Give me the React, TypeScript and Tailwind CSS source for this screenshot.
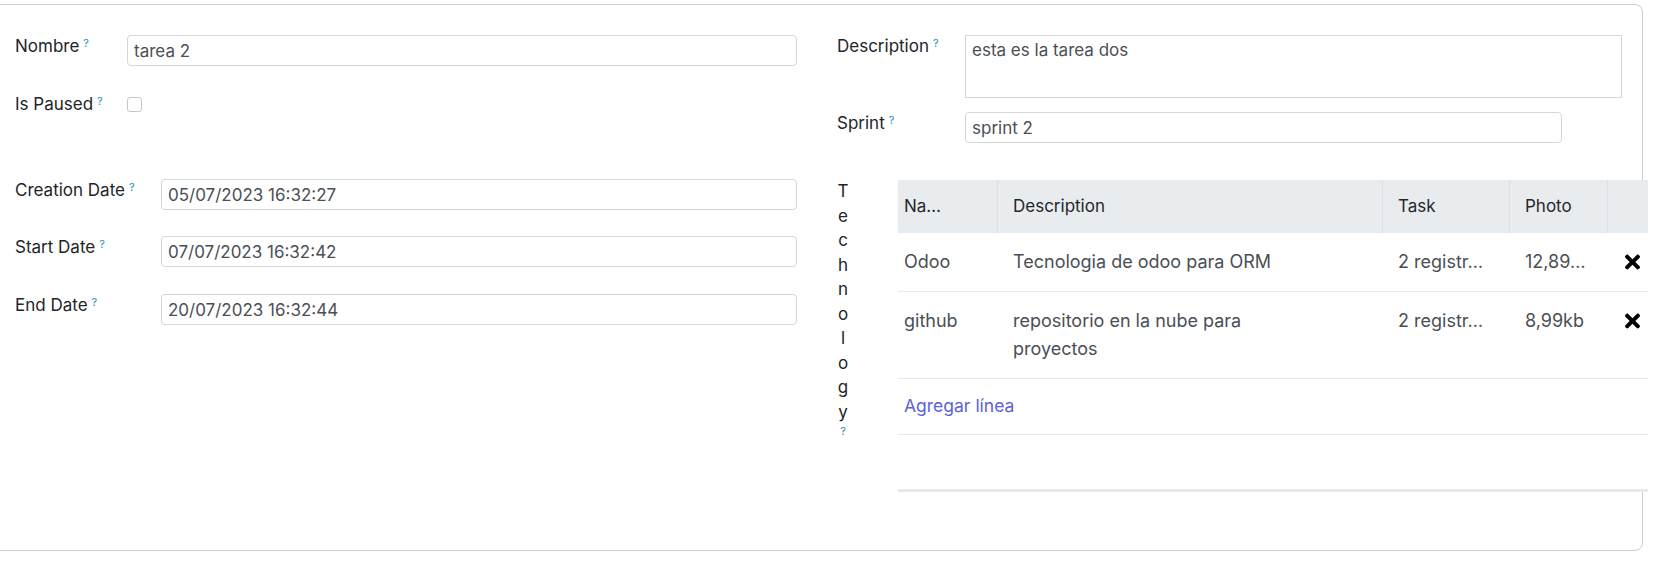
import { FaTimes } from "react-icons/fa";

// Odoo-style form: task record with technology one2many list

function Label({ text, className = "" }: { text: string; className?: string }) {
  return (
    <label className={`text-[17px] leading-[22px] text-[#212529] shrink-0 ${className}`}>
      {text}
      <sup className="ml-[4px] text-[11px] text-[#1f8db5]">?</sup>
    </label>
  );
}

function TextInput({ value, className = "" }: { value: string; className?: string }) {
  return (
    <input
      readOnly
      value={value}
      className={`h-[31px] px-[6px] border border-[#d3d6db] rounded-[4px] text-[17px] text-[#4a4f55] outline-none bg-white ${className}`}
    />
  );
}

const technologies = [
  { name: "Odoo", description: ["Tecnologia de odoo para ORM"], task: "2 registr…", photo: "12,89…" },
  { name: "github", description: ["repositorio en la nube para", "proyectos"], task: "2 registr…", photo: "8,99kb" },
];

export default function App() {
  const letters = "Technology".split("");

  return (
    <div className="min-h-[563px] bg-white font-['Inter',sans-serif]">
      <div className="ml-[-8px] mt-[4px] w-[1651px] h-[547px] border border-[#cbccd3] rounded-lg bg-white pt-[30px] pl-[22px] flex">
        {/* Left column */}
        <div className="w-[782px] shrink-0">
          <div className="flex items-start">
            <Label text="Nombre" className="w-[112px]" />
            <TextInput value="tarea 2" className="flex-1" />
          </div>
          <div className="flex items-start mt-[27px]">
            <Label text="Is Paused" className="w-[112px]" />
            <div className="mt-[4px] w-[15px] h-[15px] border border-[#c5c8ce] rounded-[3px] bg-white" />
          </div>

          <div className="mt-[64px] flex flex-col">
            <div className="flex items-start">
              <Label text="Creation Date" className="w-[146px]" />
              <TextInput value="05/07/2023 16:32:27" className="flex-1" />
            </div>
            <div className="flex items-start mt-[26px]">
              <Label text="Start Date" className="w-[146px]" />
              <TextInput value="07/07/2023 16:32:42" className="flex-1" />
            </div>
            <div className="flex items-start mt-[27px]">
              <Label text="End Date" className="w-[146px]" />
              <TextInput value="20/07/2023 16:32:44" className="flex-1" />
            </div>
          </div>
        </div>

        {/* Right column */}
        <div className="ml-[40px] w-[811px] shrink-0">
          <div className="flex items-start">
            <Label text="Description" className="w-[128px]" />
            <textarea
              readOnly
              value="esta es la tarea dos"
              className="w-[657px] h-[63px] px-[6px] pt-[3px] border border-[#d3d6db] text-[17px] leading-[22px] text-[#4a4f55] resize-none outline-none"
            />
          </div>
          <div className="flex items-start mt-[14px]">
            <Label text="Sprint" className="w-[128px]" />
            <TextInput value="sprint 2" className="w-[597px]" />
          </div>

          <div className="flex items-start mt-[37px]">
            <div className="w-[61px] shrink-0 -mt-[1px]">
              <div className="w-[12px] flex flex-col items-center text-[17px] leading-[24.5px] text-[#212529]">
                {letters.map((l, i) => (
                  <span key={i}>{l}</span>
                ))}
                <sup className="text-[11px] leading-[24.5px] text-[#1f8db5] top-0 -mt-[5px]">?</sup>
              </div>
            </div>

            <div className="w-[750px] shrink-0 bg-white">
              <div className="flex h-[53px] bg-[#e9ecef] text-[17px] text-[#23272b] items-stretch">
                <div className="w-[100px] pl-[6px] flex items-center border-r border-[#dcdfe3]">Na…</div>
                <div className="w-[385px] pl-[15px] flex items-center border-r border-[#dcdfe3]">Description</div>
                <div className="w-[127px] pl-[15px] flex items-center border-r border-[#dcdfe3]">Task</div>
                <div className="w-[98px] pl-[15px] flex items-center border-r border-[#dcdfe3]">Photo</div>
                <div className="w-[40px]" />
              </div>

              {technologies.map((t) => (
                <div key={t.name} className="flex border-b border-[#e6e8eb] text-[18px] leading-[28px] text-[#4a4f55] py-[15px]">
                  <div className="w-[100px] pl-[6px]">{t.name}</div>
                  <div className="w-[385px] pl-[15px]">
                    {t.description.map((d) => (
                      <div key={d}>{d}</div>
                    ))}
                  </div>
                  <div className="w-[127px] pl-[15px]">{t.task}</div>
                  <div className="w-[98px] pl-[15px]">{t.photo}</div>
                  <div className="w-[40px] flex items-start justify-end pr-[8px] pt-[3px]">
                    <FaTimes className="w-[15px] h-[22px] text-black" />
                  </div>
                </div>
              ))}

              <div className="h-[56px] flex items-center pl-[6px] border-b border-[#e6e8eb]">
                <span className="text-[17.5px] text-[#5c62d6]">Agregar línea</span>
              </div>
              <div className="h-[57px] border-b-[3px] border-[#e6e8eb]" />
            </div>
          </div>
        </div>
      </div>
    </div>
  );
}
